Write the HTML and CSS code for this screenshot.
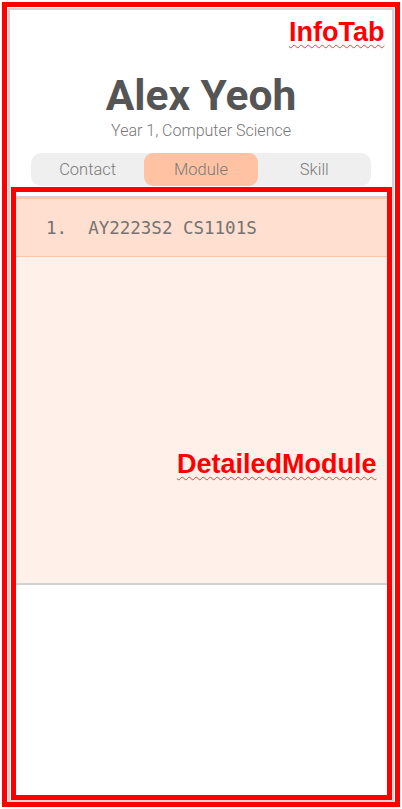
FILE: index.html
```html
<!DOCTYPE html>
<html>
<head>
<meta charset="utf-8">
<link rel="stylesheet" href="styles.css">
</head>
<body>
<div class="panel">
  <header class="profile">
    <h1 class="name">Alex Yeoh</h1>
    <p class="subtitle">Year 1, Computer Science</p>
    <nav class="tabs">
      <span class="tab">Contact</span>
      <span class="tab active">Module</span>
      <span class="tab">Skill</span>
    </nav>
  </header>
  <section class="module-list">
    <div class="module-row">1.&nbsp;&nbsp;AY2223S2 CS1101S</div>
    <div class="module-rest"></div>
  </section>
</div>
<div class="note-box outer"></div>
<div class="note-box inner"></div>
<span class="note-label info">InfoTab</span>
<span class="note-label detail">DetailedModule</span>
</body>
</html>
```
FILE: styles.css
```css
html, body {
  margin: 0;
  padding: 0;
  background: #ffffff;
}
body {
  position: relative;
  width: 402px;
  height: 809px;
  overflow: hidden;
  padding: 8px 8px 7px 8px;
  box-sizing: border-box;
}
.panel {
  box-sizing: border-box;
  width: 386px;
  height: 794px;
  border: 2px solid #d4d4d4;
  padding: 0 3px;
  display: flex;
  flex-direction: column;
}
.profile {
  display: flex;
  flex-direction: column;
  align-items: center;
  padding-top: 64px;
}
.name {
  margin: 0;
  font-family: Roboto, "Liberation Sans", sans-serif;
  font-weight: 700;
  font-size: 42.5px;
  line-height: 43px;
  color: #555555;
}
.subtitle {
  margin: 6px 0 0 0;
  font-family: Roboto, "Liberation Sans", sans-serif;
  font-size: 16px;
  line-height: 16px;
  color: #777777;
  font-weight: 300;
}
.tabs {
  margin-top: 14px;
  width: 340px;
  height: 33px;
  background: #efefef;
  border-radius: 10px;
  display: grid;
  grid-template-columns: 1fr 1fr 1fr;
}
.tab {
  display: flex;
  align-items: center;
  justify-content: center;
  font-family: Roboto, "Liberation Sans", sans-serif;
  font-size: 16.5px;
  font-weight: 300;
  color: #7a7a7a;
  border-radius: 9px;
}
.tab.active {
  background: #ffc3a3;
}
.module-list {
  margin-top: 10px;
  border-top: 2px solid #d2d2d2;
  border-bottom: 2px solid #d2d2d2;
  height: 389px;
  box-sizing: border-box;
  display: flex;
  flex-direction: column;
  background: #fff1e9;
}
.module-row {
  height: 59px;
  box-sizing: border-box;
  border-top: 1px solid #fcc6a8;
  border-bottom: 1px solid #fcc6a8;
  background: #ffdfcf;
  display: flex;
  align-items: center;
  padding-left: 33px;
  font-family: "DejaVu Sans Mono", "Liberation Mono", monospace;
  font-size: 17.5px;
  color: #737373;
  white-space: nowrap;
}
.module-rest {
  flex: 1;
}
.note-box {
  position: absolute;
  box-sizing: border-box;
  border: 5px solid #ff0000;
}
.note-box.outer {
  left: 2px;
  top: 2px;
  width: 398px;
  height: 805px;
}
.note-box.inner {
  left: 11px;
  top: 187px;
  width: 381px;
  height: 613px;
}
.note-label {
  position: absolute;
  font-family: "Liberation Sans", Arial, sans-serif;
  font-weight: 700;
  font-size: 27px;
  line-height: 27px;
  color: #ff0000;
  text-decoration: underline wavy #f04040;
  text-decoration-thickness: 1px;
  text-underline-offset: 3px;
}
.note-label.info {
  left: 289px;
  top: 19px;
}
.note-label.detail {
  left: 177px;
  top: 451px;
}
```
